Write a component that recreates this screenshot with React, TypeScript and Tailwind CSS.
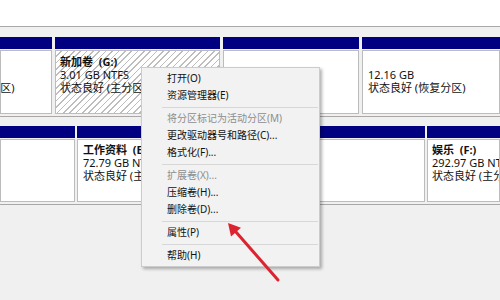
import React from 'react';

const hatch =
  'bg-[image:repeating-linear-gradient(135deg,#ffffff_0px,#ffffff_3.4px,#bdbdbd_3.4px,#bdbdbd_4.5px)]';

function Cell({
  className = '',
  hatched = false,
  pt = 'pt-[4px]',
  children,
}: {
  className?: string;
  hatched?: boolean;
  pt?: string;
  children?: React.ReactNode;
}) {
  return (
    <div className={`flex h-full min-w-0 flex-col ${className}`}>
      <div className="h-[12px] shrink-0 bg-[#000080]" />
      <div
        className={`mt-[1px] flex-1 overflow-hidden border border-[#bcbcbc] px-[4px] ${pt} text-[11px] leading-[13px] text-[#111] ${
          hatched ? hatch : 'bg-white'
        }`}
      >
        {children}
      </div>
    </div>
  );
}

function Info({ name, size, status }: { name?: string; size: string; status: string }) {
  return (
    <div className="whitespace-pre">
      <div className="h-[13px] font-bold">{name}</div>
      <div className="h-[13px]">{size}</div>
      <div className="h-[13px]">{status}</div>
    </div>
  );
}

type Item = { label: string; disabled?: boolean } | 'sep';

const menu: Item[] = [
  { label: '打开(O)' },
  { label: '资源管理器(E)' },
  'sep',
  { label: '将分区标记为活动分区(M)', disabled: true },
  { label: '更改驱动器号和路径(C)...' },
  { label: '格式化(F)...' },
  'sep',
  { label: '扩展卷(X)...', disabled: true },
  { label: '压缩卷(H)...' },
  { label: '删除卷(D)...' },
  'sep',
  { label: '属性(P)' },
  'sep',
  { label: '帮助(H)' },
];

function ContextMenu() {
  return (
    <div className="absolute left-[141px] top-[67px] w-[179px] border border-[#cccccc] bg-[#f2f2f2] py-[2px] shadow-[2px_2px_3px_rgba(0,0,0,0.3)]">
      {menu.map((it, i) =>
        it === 'sep' ? (
          <div key={i} className="flex h-[6px] items-center pl-[20px] pr-[1px]">
            <div className="h-px w-full bg-[#d7d7d7]" />
          </div>
        ) : (
          <div
            key={i}
            className={`flex h-[17px] items-center whitespace-nowrap pl-[25px] text-[10px] ${
              it.disabled ? 'text-[#8d8d8d]' : 'text-[#111]'
            }`}
          >
            {it.label}
          </div>
        )
      )}
    </div>
  );
}

function Arrow() {
  return (
    <svg className="pointer-events-none absolute left-0 top-0" width="500" height="300" viewBox="0 0 500 300">
      <line x1="278" y1="280" x2="236" y2="232" stroke="#dc2430" strokeWidth="3" strokeLinecap="round" />
      <polygon points="228,223 241,227.7 231,236.5" fill="#dc2430" />
    </svg>
  );
}

export default function App() {
  return (
    <div className="relative h-[300px] w-[500px] overflow-hidden bg-[#f0f0f0] font-['Noto_Sans','Noto_Sans_CJK_SC',sans-serif]">
      <div className="h-[27px] border-b border-[#a8a8a8] bg-white" />

      {/* disk 1 */}
      <div className="border-b border-[#a8a8a8] pb-[2px] pt-[10px]">
        <div className="flex h-[77px] gap-[3px]">
          <Cell className="w-[52px] shrink-0">
            <div className="-ml-[77px]">
              <Info size="" status="状态良好 (主分区)" />
            </div>
          </Cell>
          <Cell className="w-[165px] shrink-0" hatched>
            <Info name="新加卷  (G:)" size="3.01 GB NTFS" status="状态良好 (主分区)" />
          </Cell>
          <Cell className="w-[136px] shrink-0" />
          <Cell className="flex-1">
            <div className="pl-[1px]">
              <Info size="12.16 GB" status="状态良好 (恢复分区)" />
            </div>
          </Cell>
        </div>
      </div>

      {/* disk 2 */}
      <div className="border-b border-[#a8a8a8] pb-[2px] pt-[9px]">
        <div className="flex h-[76px] gap-[2px]">
          <Cell className="w-[75px] shrink-0" />
          <Cell className="w-[348px] shrink-0" pt="pt-[3px]">
            <div className="pl-[1px]">
              <Info name="工作资料  (E:)" size="72.79 GB NTFS" status="状态良好 (主分区)" />
            </div>
          </Cell>
          <Cell className="flex-1" pt="pt-[3px]">
            <Info name="娱乐  (F:)" size="292.97 GB NTFS" status="状态良好 (主分区)" />
          </Cell>
        </div>
      </div>

      <ContextMenu />
      <Arrow />
    </div>
  );
}
